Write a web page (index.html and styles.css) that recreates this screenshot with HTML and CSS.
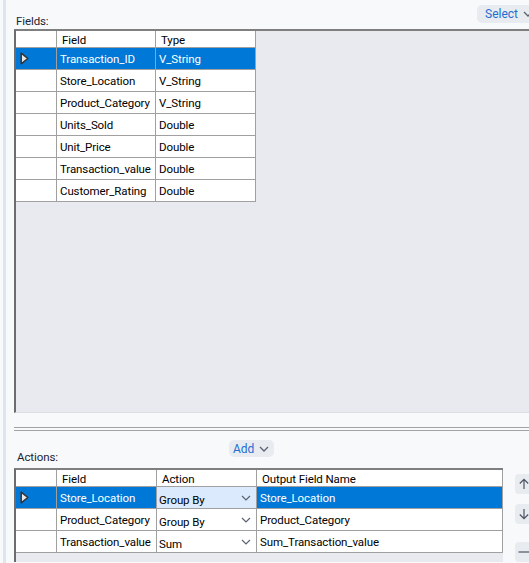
FILE: index.html
```html
<!DOCTYPE html>
<html lang="en">
<head>
    <meta charset="UTF-8">
    <title>Summarize</title>
    <link rel="stylesheet" href="styles.css">
</head>
<body>
    <div class="window">
        <div class="rail"></div>
        <div class="content">
            <div class="section-head fields-head">
                <span class="label">Fields:</span>
                <button class="pill select-btn">Select
                    <svg width="10" height="6" viewBox="0 0 10 6"><path d="M1 1 L5 5 L9 1" fill="none" stroke="#5b6371" stroke-width="1.3"/></svg>
                </button>
            </div>
            <div class="panel fields-panel">
                <div class="grid fields-grid">
                    <div class="cell head"></div>
                    <div class="cell head">Field</div>
                    <div class="cell head">Type</div>

                    <div class="cell ind selected">
                        <svg class="marker" viewBox="0 0 9 13"><path d="M1.2 1.2 L7.8 6.5 L1.2 11.8 Z" fill="#e8e8e8" stroke="#333" stroke-width="1.5" stroke-linejoin="round"/></svg>
                    </div>
                    <div class="cell selected">Transaction_ID</div>
                    <div class="cell selected">V_String</div>

                    <div class="cell ind"></div>
                    <div class="cell">Store_Location</div>
                    <div class="cell">V_String</div>

                    <div class="cell ind"></div>
                    <div class="cell">Product_Category</div>
                    <div class="cell">V_String</div>

                    <div class="cell ind"></div>
                    <div class="cell">Units_Sold</div>
                    <div class="cell">Double</div>

                    <div class="cell ind"></div>
                    <div class="cell">Unit_Price</div>
                    <div class="cell">Double</div>

                    <div class="cell ind"></div>
                    <div class="cell">Transaction_value</div>
                    <div class="cell">Double</div>

                    <div class="cell ind"></div>
                    <div class="cell">Customer_Rating</div>
                    <div class="cell">Double</div>
                </div>
            </div>
            <div class="splitter"></div>
            <div class="section-head actions-head">
                <span class="label">Actions:</span>
                <button class="pill add-btn">Add
                    <svg width="10" height="6" viewBox="0 0 10 6"><path d="M1 1 L5 5 L9 1" fill="none" stroke="#5b6371" stroke-width="1.3"/></svg>
                </button>
            </div>
            <div class="actions-row">
                <div class="panel actions-panel">
                    <div class="grid actions-grid">
                        <div class="cell head"></div>
                        <div class="cell head">Field</div>
                        <div class="cell head">Action</div>
                        <div class="cell head">Output Field Name</div>

                        <div class="cell ind selected">
                            <svg class="marker" viewBox="0 0 9 13"><path d="M1.2 1.2 L7.8 6.5 L1.2 11.8 Z" fill="#e8e8e8" stroke="#333" stroke-width="1.5" stroke-linejoin="round"/></svg>
                        </div>
                        <div class="cell selected">Store_Location</div>
                        <div class="cell combo active"><span>Group By</span>
                            <svg width="10" height="6" viewBox="0 0 10 6"><path d="M1 1 L5 5 L9 1" fill="none" stroke="#5b6371" stroke-width="1.2"/></svg>
                        </div>
                        <div class="cell selected">Store_Location</div>

                        <div class="cell ind"></div>
                        <div class="cell">Product_Category</div>
                        <div class="cell combo"><span>Group By</span>
                            <svg width="10" height="6" viewBox="0 0 10 6"><path d="M1 1 L5 5 L9 1" fill="none" stroke="#5b6371" stroke-width="1.2"/></svg>
                        </div>
                        <div class="cell">Product_Category</div>

                        <div class="cell ind"></div>
                        <div class="cell">Transaction_value</div>
                        <div class="cell combo"><span>Sum</span>
                            <svg width="10" height="6" viewBox="0 0 10 6"><path d="M1 1 L5 5 L9 1" fill="none" stroke="#5b6371" stroke-width="1.2"/></svg>
                        </div>
                        <div class="cell">Sum_Transaction_value</div>
                    </div>
                </div>
                <div class="side-buttons">
                    <button class="side-btn">
                        <svg width="12" height="12" viewBox="0 0 12 12"><path d="M6 11 V1.5 M1.8 5.5 L6 1.3 L10.2 5.5" fill="none" stroke="#4d5563" stroke-width="1.2"/></svg>
                    </button>
                    <button class="side-btn">
                        <svg width="12" height="12" viewBox="0 0 12 12"><path d="M6 1 V10.5 M1.8 6.5 L6 10.7 L10.2 6.5" fill="none" stroke="#4d5563" stroke-width="1.2"/></svg>
                    </button>
                    <button class="side-btn minus">
                        <svg width="12" height="12" viewBox="0 0 12 12"><path d="M0.5 6 H11.5" fill="none" stroke="#4d5563" stroke-width="1.2"/></svg>
                    </button>
                </div>
            </div>
        </div>
    </div>
</body>
</html>
```

FILE: styles.css
```css
body {
    margin: 0;
    padding: 0;
    background-color: #f8f9fb;
    font-family: 'Roboto', 'Noto Sans', sans-serif;
    font-size: 11.5px;
    letter-spacing: -0.1px;
    color: #000;
    overflow: hidden;
}
.window {
    display: flex;
    width: 529px;
    height: 563px;
    overflow: hidden;
}
.rail {
    flex: 0 0 3px;
    margin-left: 3px;
    background: #dfe5ee;
}
.content {
    flex: 1;
    padding-left: 8px;
    min-width: 0;
}
.section-head {
    display: flex;
    justify-content: space-between;
}
.label {
    color: #1b2433;
    line-height: 14px;
}
.fields-head {
    height: 29px;
}
.fields-head .label {
    align-self: flex-end;
    margin: 0 0 1px 2px;
}
.pill {
    display: flex;
    align-items: center;
    gap: 5px;
    height: 18px;
    padding: 0 7px;
    border: none;
    border-radius: 5px;
    background: #e8ebf0;
    color: #1f6fd1;
    font-family: inherit;
    font-size: 12px;
    letter-spacing: 0;
}
.select-btn {
    margin: 5px -12px 0 0;
    padding: 0 8px;
}
.panel {
    background: #e9eaef;
    border-top: 2px solid #7f7f7f;
    border-left: 2px solid #6c6c6c;
}
.fields-panel {
    height: 381px;
    border-bottom: 1px solid #dcdde2;
    margin-right: -4px;
}
.grid {
    display: grid;
    background: #fff;
}
.fields-grid {
    grid-template-columns: 41px 99px 100px;
    grid-template-rows: 17px repeat(7, 22px);
    width: 240px;
}
.actions-grid {
    grid-template-columns: 41px 100px 100px 246px;
    grid-template-rows: 17px repeat(3, 22px);
    width: 487px;
}
.cell {
    box-sizing: border-box;
    border-right: 1px solid #a0a0a0;
    border-bottom: 1px solid #a0a0a0;
    padding-left: 3px;
    display: flex;
    align-items: center;
    white-space: nowrap;
    overflow: hidden;
}
.cell.head {
    padding: 2px 0 0 5px;
}
.cell.ind {
    padding-left: 4px;
}
.marker {
    display: block;
    width: 9px;
    height: 13px;
}
.cell.selected {
    background: #0078d7;
    color: #fff;
}
.combo {
    justify-content: space-between;
    padding-left: 2px;
    padding-right: 5px;
}
.combo span {
    padding-top: 4px;
}
.combo.active {
    background: #dbeafc;
}
.splitter {
    height: 2px;
    margin-top: 14px;
    margin-right: -4px;
    border-top: 1px solid #a3a3a3;
    border-bottom: 1px solid #a3a3a3;
}
.actions-head {
    height: 37px;
    justify-content: flex-start;
}
.actions-head .label {
    flex: 0 0 48px;
    align-self: flex-end;
    margin: 0 0 4px 3px;
}
.add-btn {
    margin: 9px 0 0 164px;
    height: 17px;
    padding: 0 5px 0 4px;
}
.actions-row {
    display: flex;
    align-items: flex-start;
}
.actions-panel {
    width: 487px;
    height: 92px;
}
.side-buttons {
    display: flex;
    flex-direction: column;
    gap: 10px;
    margin: 6px 0 0 12px;
}
.side-btn {
    width: 22px;
    height: 20px;
    border: none;
    border-radius: 4px;
    background: #e8ebf0;
    padding: 0 0 0 3px;
    display: flex;
    align-items: center;
}
.side-btn.minus {
    margin-top: 8px;
}
```
